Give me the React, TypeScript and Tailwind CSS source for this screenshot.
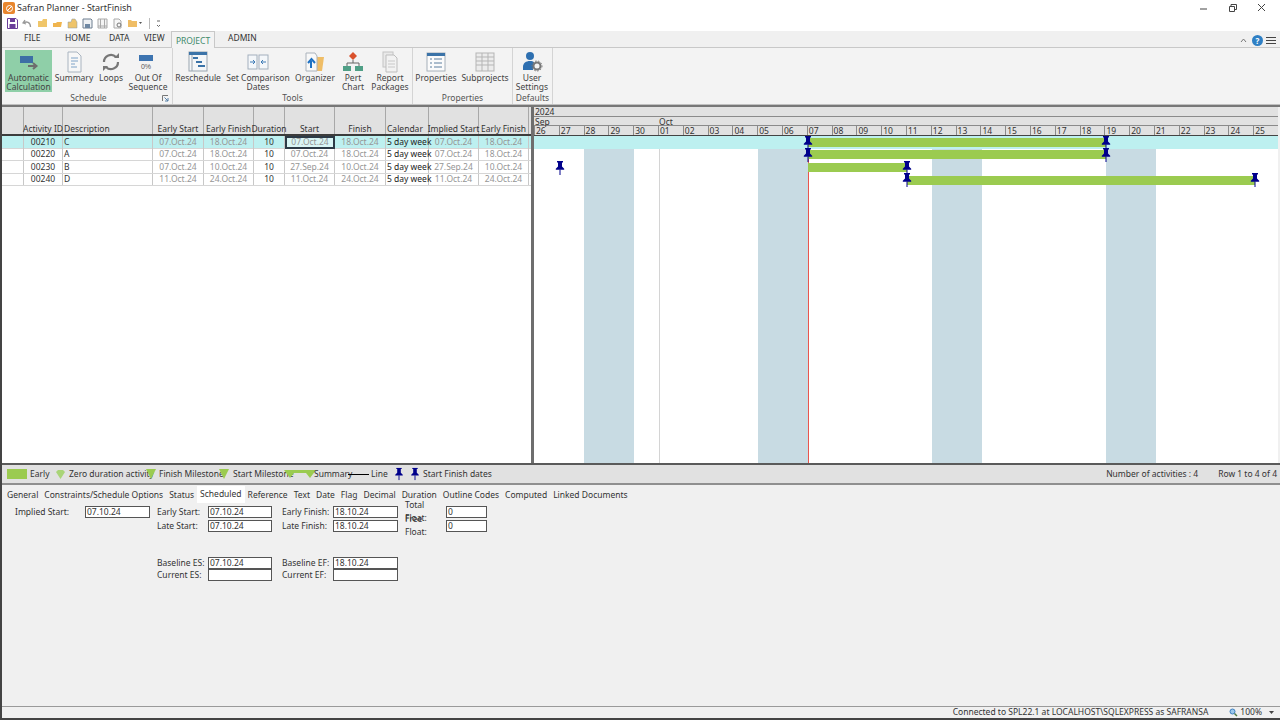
import React from "react";

const Pin = ({ className = "" }: { className?: string }) => (
  <svg width="10" height="14" viewBox="0 0 10 14" className={className}>
    <path d="M2 0h6v1.5H7v4l2.2 2.2v1.1H.8V7.700L3 5.500v-4H2z" fill="#00008b" />
    <rect x="4.500" y="8.500" width="1" height="5.500" fill="#00008b" />
  </svg>
);

const RibbonIcon = ({ name }: { name: string }) => {
  const s = { width: 22, height: 22, viewBox: "0 0 22 22" };
  switch (name) {
    case "auto":
      return (
        <svg {...s}>
          <rect x="2" y="5" width="13" height="7" fill="#3d6fa5" />
          <path d="M10 15h8M15 12l3.500 3-3.500 3" stroke="#6d6d6d" strokeWidth="2" fill="none" />
        </svg>
      );
    case "summary":
      return (
        <svg {...s}>
          <path d="M5 1h9l4 4v16H5z" fill="#f7f7f7" stroke="#a9b4c0" />
          <path d="M8 7h7M8 10h7M8 13h4M8 16h6" stroke="#7ea3c8" strokeWidth="1" />
        </svg>
      );
    case "loops":
      return (
        <svg {...s}>
          <path d="M4 11a7 7 0 0 1 12-5" stroke="#777" strokeWidth="2.200" fill="none" />
          <path d="M18 11a7 7 0 0 1-12 5" stroke="#777" strokeWidth="2.200" fill="none" />
          <path d="M14 7h5V2zM8 15H3v5z" fill="#777" />
        </svg>
      );
    case "oos":
      return (
        <svg {...s}>
          <rect x="2" y="4" width="14" height="6" fill="#3d74b0" />
          <text x="9" y="18" fontSize="7" textAnchor="middle" fill="#555" fontFamily="Liberation Sans, sans-serif">0%</text>
        </svg>
      );
    case "resched":
      return (
        <svg {...s}>
          <rect x="2" y="1" width="18" height="19" fill="#f4f6f8" stroke="#9aa5b0" />
          <rect x="2" y="1" width="18" height="3" fill="#3b73a8" />
          <path d="M6 6h5v2H6zM9 10h6v2H9zM11 14h7v2h-7z" fill="#3b73a8" />
          <path d="M5 4v16" stroke="#9aa5b0" />
        </svg>
      );
    case "compare":
      return (
        <svg {...s}>
          <rect x="1" y="4" width="9" height="14" fill="#f4f7fa" stroke="#a3b0bd" />
          <rect x="12" y="4" width="9" height="14" fill="#f4f7fa" stroke="#a3b0bd" />
          <path d="M3 11h5M6 9l2 2-2 2M19 11h-5M16 9l-2 2 2 2" stroke="#3d7ab5" fill="none" />
        </svg>
      );
    case "org":
      return (
        <svg {...s}>
          <path d="M12 6h8l-2 14h-8z" fill="#efbd66" />
          <path d="M2 2h9l2 3v15H2z" fill="#f8f8f8" stroke="#aab2bb" />
          <path d="M7 17v-7M4 12l3.500-4 3.500 4" stroke="#1f72c4" strokeWidth="2" fill="none" />
        </svg>
      );
    case "pert":
      return (
        <svg {...s}>
          <path d="M11 1l4 4-4 4-4-4z" fill="#d9512c" />
          <path d="M11 9v3M5 15v-3h12v3" stroke="#666" fill="none" />
          <rect x="1" y="15" width="8" height="5" fill="#4f9f86" />
          <rect x="13" y="15" width="8" height="5" fill="#4f9f86" />
        </svg>
      );
    case "report":
      return (
        <svg {...s}>
          <rect x="4" y="1" width="10" height="15" fill="#e9e9e9" stroke="#c4c4c4" />
          <path d="M7 4h8l3 3v14H7z" fill="#f2f2f2" stroke="#bdbdbd" />
          <path d="M9 10h7M9 13h7M9 16h7" stroke="#c8c8c8" />
        </svg>
      );
    case "props":
      return (
        <svg {...s}>
          <rect x="2" y="2" width="18" height="18" fill="#fbfbfb" stroke="#a6b0ba" />
          <rect x="2" y="2" width="18" height="3" fill="#3b73a8" />
          <path d="M5 8h2M9 8h8M5 12h2M9 12h8M5 16h2M9 16h8" stroke="#5c7f9f" />
        </svg>
      );
    case "sub":
      return (
        <svg {...s}>
          <rect x="2" y="2" width="18" height="18" fill="#ececec" stroke="#b5b5b5" />
          <path d="M2 6h18M2 10h18M2 14h18M8 2v18M14 2v18" stroke="#b5b5b5" />
        </svg>
      );
    default:
      return (
        <svg {...s}>
          <circle cx="9" cy="5" r="4" fill="#2e6fb0" />
          <path d="M2 19v-3c0-4 3-6 7-6 2 0 3 .5 4 1l-1 8z" fill="#2e6fb0" />
          <circle cx="16" cy="15" r="3.500" fill="none" stroke="#777" strokeWidth="2" />
          <circle cx="16" cy="15" r="5" fill="none" stroke="#777" strokeWidth="1" strokeDasharray="1.500 1.500" />
        </svg>
      );
  }
};

const RBtn = ({ w, icon, label, active }: { w: string; icon: string; label: string[]; active?: boolean }) => (
  <div className={`${w} h-[42px] flex flex-col items-center shrink-0 ${active ? "bg-[#8fcfa8]" : ""}`}>
    <div className="h-[23px] flex items-center pt-[1px]">
      <RibbonIcon name={icon} />
    </div>
    <div className="text-[8.5px] leading-[9px] text-center text-[#444] whitespace-nowrap">
      {label.map((l) => (
        <div key={l}>{l}</div>
      ))}
    </div>
  </div>
);

const Group = ({ w, label, children, launcher }: { w: string; label: string; children: React.ReactNode; launcher?: boolean }) => (
  <div className={`${w} h-[56px] flex flex-col border-r border-[#d4d4d4] shrink-0 relative`}>
    <div className="flex h-[44px] pt-[2px]">{children}</div>
    <div className="flex-1 text-center text-[8.5px] leading-[11px] text-[#555]">{label}</div>
    {launcher && (
      <svg width="7" height="7" viewBox="0 0 7 7" className="absolute right-[3px] bottom-[2px]">
        <path d="M.5 6V.5H6" stroke="#777" fill="none" />
        <path d="M2.500 2.500L6 6M6 3v3H3" stroke="#5580a8" fill="none" />
      </svg>
    )}
  </div>
);

const cols = "grid grid-cols-[22px_39px_90px_51px_50px_31px_50px_51px_43px_50px_50px]";
const heads = ["", "Activity ID", "Description", "Early Start", "Early Finish", "Duration", "Start", "Finish", "Calendar", "Implied Start", "Early Finish"];
const rows = [
  ["00210", "C", "07.Oct.24", "18.Oct.24", "10", "07.Oct.24", "18.Oct.24", "5 day week", "07.Oct.24", "18.Oct.24"],
  ["00220", "A", "07.Oct.24", "18.Oct.24", "10", "07.Oct.24", "18.Oct.24", "5 day week", "07.Oct.24", "18.Oct.24"],
  ["00230", "B", "07.Oct.24", "10.Oct.24", "10", "27.Sep.24", "10.Oct.24", "5 day week", "27.Sep.24", "10.Oct.24"],
  ["00240", "D", "11.Oct.24", "24.Oct.24", "10", "11.Oct.24", "24.Oct.24", "5 day week", "11.Oct.24", "24.Oct.24"],
];
const heights = ["h-[13px]", "h-[12px]", "h-[13px]", "h-[12px]"];
const days = ["26", "27", "28", "29", "30", "01", "02", "03", "04", "05", "06", "07", "08", "09", "10", "11", "12", "13", "14", "15", "16", "17", "18", "19", "20", "21", "22", "23", "24", "25"];

const Grid = () => (
  <div className="w-[529px] shrink-0 bg-white">
    <div className={`${cols} h-[29px] bg-[#e1e1e1] border-b-2 border-[#3c3c3c]`}>
      {heads.map((h, i) => (
        <div key={i} className={`border-r border-[#a8a8a8] flex items-end pb-[0px] text-[8.5px] leading-[10px] text-[#333] whitespace-nowrap ${i === 2 || i === 8 ? "justify-start pl-[1px]" : "justify-center"}`}>
          {h}
        </div>
      ))}
    </div>
    {rows.map((r, ri) => (
      <div key={ri} className={`${cols} ${heights[ri]} border-b border-[#d6d6d6] text-[8.5px] ${ri === 0 ? "bg-[#bdf0f0]" : "bg-white"}`}>
        <div className="border-r border-[#c8c8c8]" />
        {r.map((c, i) => {
          const cls =
            i === 0 || i === 4
              ? "justify-center text-[#333]"
              : i === 1
                ? "pl-[1px] text-[#333]"
                : i === 7
                  ? "pl-[1px] text-[#222]"
                  : "justify-center text-[#969696]";
          const sel = ri === 0 && i === 5;
          return (
            <div key={i} className={`flex items-center leading-none whitespace-nowrap ${cls} ${sel ? "border-2 border-[#2c3a46] bg-[#d9f5f5]" : "border-r border-[#c8c8c8]"}`}>
              {c}
            </div>
          );
        })}
      </div>
    ))}
  </div>
);

const bands = ["left-[50px]", "left-[224px]", "left-[398px]", "left-[572px]"];

const Gantt = () => (
  <div className="flex-1 flex flex-col min-w-0 border-l-[3px] border-[#6e6e6e] bg-white">
    <div className="h-[29px] bg-[#e1e1e1] text-[8.5px] leading-[9px] text-[#333] border-b border-[#444]">
      <div className="h-[10px] border-b border-[#8a8a8a] pl-[1px]">2024</div>
      <div className="h-[9px] border-b border-[#8a8a8a] relative pl-[1px]">
        Sep
        <span className="absolute left-[125px] top-0">Oct</span>
      </div>
      <div className="grid grid-cols-[repeat(30,1fr)] h-[9px]">
        {days.map((d) => (
          <div key={d} className="border-l border-[#8a8a8a] pl-[1px] overflow-hidden">
            {d}
          </div>
        ))}
      </div>
    </div>
    <div className="flex-1 relative overflow-hidden">
      {bands.map((b) => (
        <div key={b} className={`absolute ${b} top-[13px] bottom-0 w-[49.500px] bg-[#c8dbe3]`} />
      ))}
      <div className="absolute left-[125px] top-[13px] bottom-0 w-px bg-[#d4d4d4]" />
      <div className="absolute left-[274px] top-[13px] bottom-0 w-px bg-[#e8564e]" />
      <div className="absolute left-0 right-0 top-0 h-[13px] bg-[#bdf0f0]" />
      <div className="absolute left-[274px] top-[2px] w-[298px] h-[9px] bg-[#9bcb50]" />
      <div className="absolute left-[274px] top-[14px] w-[298px] h-[9px] bg-[#9bcb50]" />
      <div className="absolute left-[274px] top-[27px] w-[99px] h-[9px] bg-[#9bcb50]" />
      <div className="absolute left-[373px] top-[40px] w-[348px] h-[9px] bg-[#9bcb50]" />
      <Pin className="absolute left-[269px] top-[0px]" />
      <Pin className="absolute left-[567px] top-[0px]" />
      <Pin className="absolute left-[269px] top-[12px]" />
      <Pin className="absolute left-[567px] top-[12px]" />
      <Pin className="absolute left-[21px] top-[25px]" />
      <Pin className="absolute left-[368px] top-[25px]" />
      <Pin className="absolute left-[368px] top-[37px]" />
      <Pin className="absolute left-[716px] top-[37px]" />
    </div>
  </div>
);

const Tri = () => (
  <svg width="10" height="10" viewBox="0 0 10 10">
    <path d="M0 0h10L5 10z" fill="#9bcb50" />
  </svg>
);

const Legend = () => (
  <div className="h-[22px] bg-[#e1e1e1] border-t-2 border-b-2 border-t-[#5a5a5a] border-b-[#8f8f8f] flex items-center pl-[5px] pr-[3px] text-[8.5px] text-[#333] shrink-0 whitespace-nowrap">
    <div className="w-[20px] h-[10px] bg-[#9bcb50]" />
    <span className="ml-[3px] w-[26px]">Early</span>
    <svg width="9" height="9" viewBox="0 0 9 9" className="ml-[0px]">
      <path d="M0 2l2-2h5l2 2-4.500 7z" fill="#a9d477" />
    </svg>
    <span className="ml-[4px] w-[77px]">Zero duration activity</span>
    <Tri />
    <span className="ml-[3px] w-[60px]">Finish Milestone</span>
    <Tri />
    <span className="ml-[4px] w-[49px]">Start Milestone</span>
    <svg width="32" height="10" viewBox="0 0 32 10" className="ml-[2px]">
      <path d="M0 1h32L26 9 22 4H10L6 9z" fill="#9bcb50" />
    </svg>
    <span className="ml-[-2px] w-[34px]">Summary</span>
    <div className="w-[21px] h-[1px] bg-black" />
    <span className="ml-[2px] w-[23px]">Line</span>
    <Pin className="scale-90" />
    <Pin className="ml-[6px] scale-90" />
    <span className="ml-[3px]">Start Finish dates</span>
    <span className="ml-auto">Number of activities : 4</span>
    <span className="ml-[20px]">Row 1 to 4 of 4</span>
  </div>
);

const tabs = ["General", "Constraints/Schedule Options", "Status", "Scheduled", "Reference", "Text", "Date", "Flag", "Decimal", "Duration", "Outline Codes", "Computed", "Linked Documents"];

const Field = ({ label, lw, w, value }: { label: string; lw: string; w: string; value?: string }) => (
  <div className="flex items-center h-[12px]">
    <div className={`${lw} text-[8.5px] text-[#333] shrink-0`}>{label}</div>
    <div className={`${w} h-[12px] border border-[#555] bg-white text-[8.5px] leading-[10px] text-[#333] pl-[1px]`}>{value}</div>
  </div>
);

export default function App() {
  return (
    <div className="w-[1280px] h-[720px] flex flex-col bg-[#f0f0f0] overflow-hidden border-l-2 border-[#444] font-['Noto_Sans','Liberation_Sans',sans-serif]">
      <div className="h-[16px] bg-white flex items-center shrink-0 ml-[-2px]">
        <div className="w-[12px] h-[12px] ml-[3px] bg-[#e8862e] rounded-[2px] flex items-center justify-center">
          <svg width="9" height="9" viewBox="0 0 9 9">
            <circle cx="4.500" cy="4.500" r="3" stroke="#fff" fill="none" />
            <path d="M2 7l5-5" stroke="#fff" />
          </svg>
        </div>
        <span className="ml-[2px] text-[9px] text-[#333]">Safran Planner - StartFinish</span>
        <div className="ml-auto flex items-center text-[#444]">
          <svg width="10" height="10" viewBox="0 0 10 10" className="mr-[19px]">
            <path d="M1 6h7" stroke="#444" />
          </svg>
          <svg width="10" height="10" viewBox="0 0 10 10" className="mr-[19px]">
            <path d="M1.500 3.500h5v5h-5zM3 3.500V1.500h5.500v5h-2" stroke="#444" fill="none" />
          </svg>
          <svg width="10" height="10" viewBox="0 0 10 10" className="mr-[13px]">
            <path d="M1 1l7 7M8 1l-7 7" stroke="#444" />
          </svg>
        </div>
      </div>
      <div className="h-[15px] bg-white flex items-center shrink-0 pl-[5px] gap-[4px]">
        <svg width="11" height="11" viewBox="0 0 11 11">
          <path d="M.5.500h8.500l1.500 1.500v8.500H.5z" fill="none" stroke="#6a3d9a" />
          <rect x="3" y="1" width="5" height="3" fill="#6a3d9a" />
          <rect x="2.500" y="6" width="6" height="4" fill="#6a3d9a" />
        </svg>
        <svg width="11" height="11" viewBox="0 0 11 11">
          <path d="M3 2L1 5l3 1M1.500 5c3-2 7-1 7 4" stroke="#999" strokeWidth="1.300" fill="none" />
        </svg>
        <svg width="11" height="11" viewBox="0 0 11 11">
          <path d="M1 3h4l1-2h4v8H1z" fill="#f0c66a" />
        </svg>
        <svg width="11" height="11" viewBox="0 0 11 11">
          <path d="M1 5h3l1-1h5l-1 5H1z" fill="#f0b54f" />
        </svg>
        <svg width="11" height="11" viewBox="0 0 11 11">
          <path d="M1 4h3l1-3h3l2 3v6H1z" fill="#eec46b" stroke="#8a9aa5" strokeWidth=".5" />
        </svg>
        <svg width="11" height="11" viewBox="0 0 11 11">
          <path d="M1 1h8l1 1v8H1z" fill="#eef1f4" stroke="#6f7f90" />
          <rect x="3" y="6" width="5" height="4" fill="#6f88a3" />
        </svg>
        <svg width="11" height="11" viewBox="0 0 11 11">
          <path d="M1 1h9v9H1zM3.500 1v9M7.500 1v9M1 8h9" fill="#f4f4f4" stroke="#aaa" />
        </svg>
        <svg width="11" height="11" viewBox="0 0 11 11">
          <path d="M2 1h5l2 2v7H2z" fill="#f7f7f7" stroke="#aaa" />
          <circle cx="7" cy="7" r="2" fill="none" stroke="#777" />
        </svg>
        <svg width="16" height="11" viewBox="0 0 16 11">
          <path d="M1 2h3l1 1h5v6H1z" fill="#efbd66" />
          <path d="M12 4h3l-1.500 2z" fill="#555" />
        </svg>
        <div className="w-px h-[11px] bg-[#bbb] ml-[2px]" />
        <svg width="5" height="9" viewBox="0 0 5 9" className="ml-[2px]">
          <path d="M1 2h3M1 6l1.500 1.500L4 6" stroke="#666" fill="none" />
        </svg>
      </div>
      <div className="h-[17px] flex items-end shrink-0 text-[8.5px] text-[#333] relative border-b border-[#c8c8c8]">
        <div className="w-[56px] pl-[22px] pb-[2px]">FILE</div>
        <div className="w-[50px] pl-[7px] pb-[2px]">HOME</div>
        <div className="w-[36px] pl-[1px] pb-[2px]">DATA</div>
        <div className="w-[27px] pb-[2px]">VIEW</div>
        <div className="w-[44px] h-[17px] bg-[#f3f3f3] border border-[#c8c8c8] border-b-0 mb-[-1px] text-center text-[#3f8a6b] pt-[3px]">PROJECT</div>
        <div className="ml-[13px] pb-[2px]">ADMIN</div>
        <div className="ml-auto flex items-center gap-[3px] mr-[4px] mb-[1px]">
          <svg width="7" height="5" viewBox="0 0 7 5" className="mr-[2px]">
            <path d="M1 4l2.500-3L6 4" stroke="#777" fill="none" />
          </svg>
          <div className="w-[11px] h-[11px] rounded-full bg-[#2f7fc4] text-white text-[8px] font-bold leading-[11px] text-center">?</div>
          <div className="w-[10px] flex flex-col gap-[2px]">
            <div className="h-px bg-[#444]" />
            <div className="h-px bg-[#444]" />
            <div className="h-px bg-[#444]" />
          </div>
        </div>
      </div>
      <div className="h-[57px] bg-[#f3f3f3] flex shrink-0 pl-[3px] border-b border-[#c0c0c0]">
        <Group w="w-[168px]" label="Schedule" launcher>
          <RBtn w="w-[47px]" icon="auto" label={["Automatic", "Calculation"]} active />
          <RBtn w="w-[44px]" icon="summary" label={["Summary"]} />
          <RBtn w="w-[30px]" icon="loops" label={["Loops"]} />
          <RBtn w="w-[44px]" icon="oos" label={["Out Of", "Sequence"]} />
        </Group>
        <Group w="w-[240px]" label="Tools">
          <RBtn w="w-[50px]" icon="resched" label={["Reschedule"]} />
          <RBtn w="w-[70px]" icon="compare" label={["Set Comparison", "Dates"]} />
          <RBtn w="w-[44px]" icon="org" label={["Organizer"]} />
          <RBtn w="w-[32px]" icon="pert" label={["Pert", "Chart"]} />
          <RBtn w="w-[42px]" icon="report" label={["Report", "Packages"]} />
        </Group>
        <Group w="w-[100px]" label="Properties">
          <RBtn w="w-[46px]" icon="props" label={["Properties"]} />
          <RBtn w="w-[52px]" icon="sub" label={["Subprojects"]} />
        </Group>
        <Group w="w-[40px]" label="Defaults">
          <RBtn w="w-[38px]" icon="user" label={["User", "Settings"]} />
        </Group>
      </div>
      <div className="flex-1 flex min-h-0 border-t-2 border-[#777] pr-[2px]">
        <Grid />
        <Gantt />
      </div>
      <Legend />
      <div className="h-[18px] flex items-end shrink-0 text-[8.5px] text-[#333] pl-[2px] gap-[0px] whitespace-nowrap">
        {tabs.map((t) => (
          <div key={t} className={`px-[3px] flex items-center ${t === "Scheduled" ? "h-[17px] bg-white" : "h-[15px]"}`}>
            {t}
          </div>
        ))}
      </div>
      <div className="h-[203px] shrink-0 pt-[3px] flex pl-[13px]">
        <div className="w-[142px]">
          <Field label="Implied Start:" lw="w-[70px]" w="w-[65px]" value="07.10.24" />
        </div>
        <div className="w-[125px] flex flex-col">
          <div className="flex flex-col gap-[2px]">
            <Field label="Early Start:" lw="w-[51px]" w="w-[64px]" value="07.10.24" />
            <Field label="Late Start:" lw="w-[51px]" w="w-[64px]" value="07.10.24" />
          </div>
          <div className="flex flex-col mt-[25px]">
            <Field label="Baseline ES:" lw="w-[51px]" w="w-[64px]" value="07.10.24" />
            <Field label="Current ES:" lw="w-[51px]" w="w-[64px]" />
          </div>
        </div>
        <div className="w-[123px] flex flex-col">
          <div className="flex flex-col gap-[2px]">
            <Field label="Early Finish:" lw="w-[51px]" w="w-[65px]" value="18.10.24" />
            <Field label="Late Finish:" lw="w-[51px]" w="w-[65px]" value="18.10.24" />
          </div>
          <div className="flex flex-col mt-[25px]">
            <Field label="Baseline EF:" lw="w-[51px]" w="w-[65px]" value="18.10.24" />
            <Field label="Current EF:" lw="w-[51px]" w="w-[65px]" />
          </div>
        </div>
        <div className="flex flex-col gap-[2px]">
          <Field label="Total Float:" lw="w-[41px]" w="w-[41px]" value="0" />
          <Field label="Free Float:" lw="w-[41px]" w="w-[41px]" value="0" />
        </div>
      </div>
      <div className="h-[14px] shrink-0 border-t border-[#9a9a9a] border-b-2 border-b-[#444] flex items-center justify-end text-[8.5px] text-[#333] pr-[5px] whitespace-nowrap">
        <span>Connected to SPL22.1 at LOCALHOST\SQLEXPRESS as SAFRANSA</span>
        <svg width="9" height="9" viewBox="0 0 9 9" className="ml-[21px]">
          <circle cx="3.500" cy="3.500" r="2.500" fill="#9cc8ec" stroke="#3c7fbf" />
          <path d="M5.500 5.500L8 8" stroke="#4d7a45" strokeWidth="1.500" />
        </svg>
        <span className="ml-[2px]">100%</span>
        <svg width="7" height="4" viewBox="0 0 7 4" className="ml-[6px]">
          <path d="M1 0h5L3.500 3z" fill="#444" />
        </svg>
      </div>
    </div>
  );
}
